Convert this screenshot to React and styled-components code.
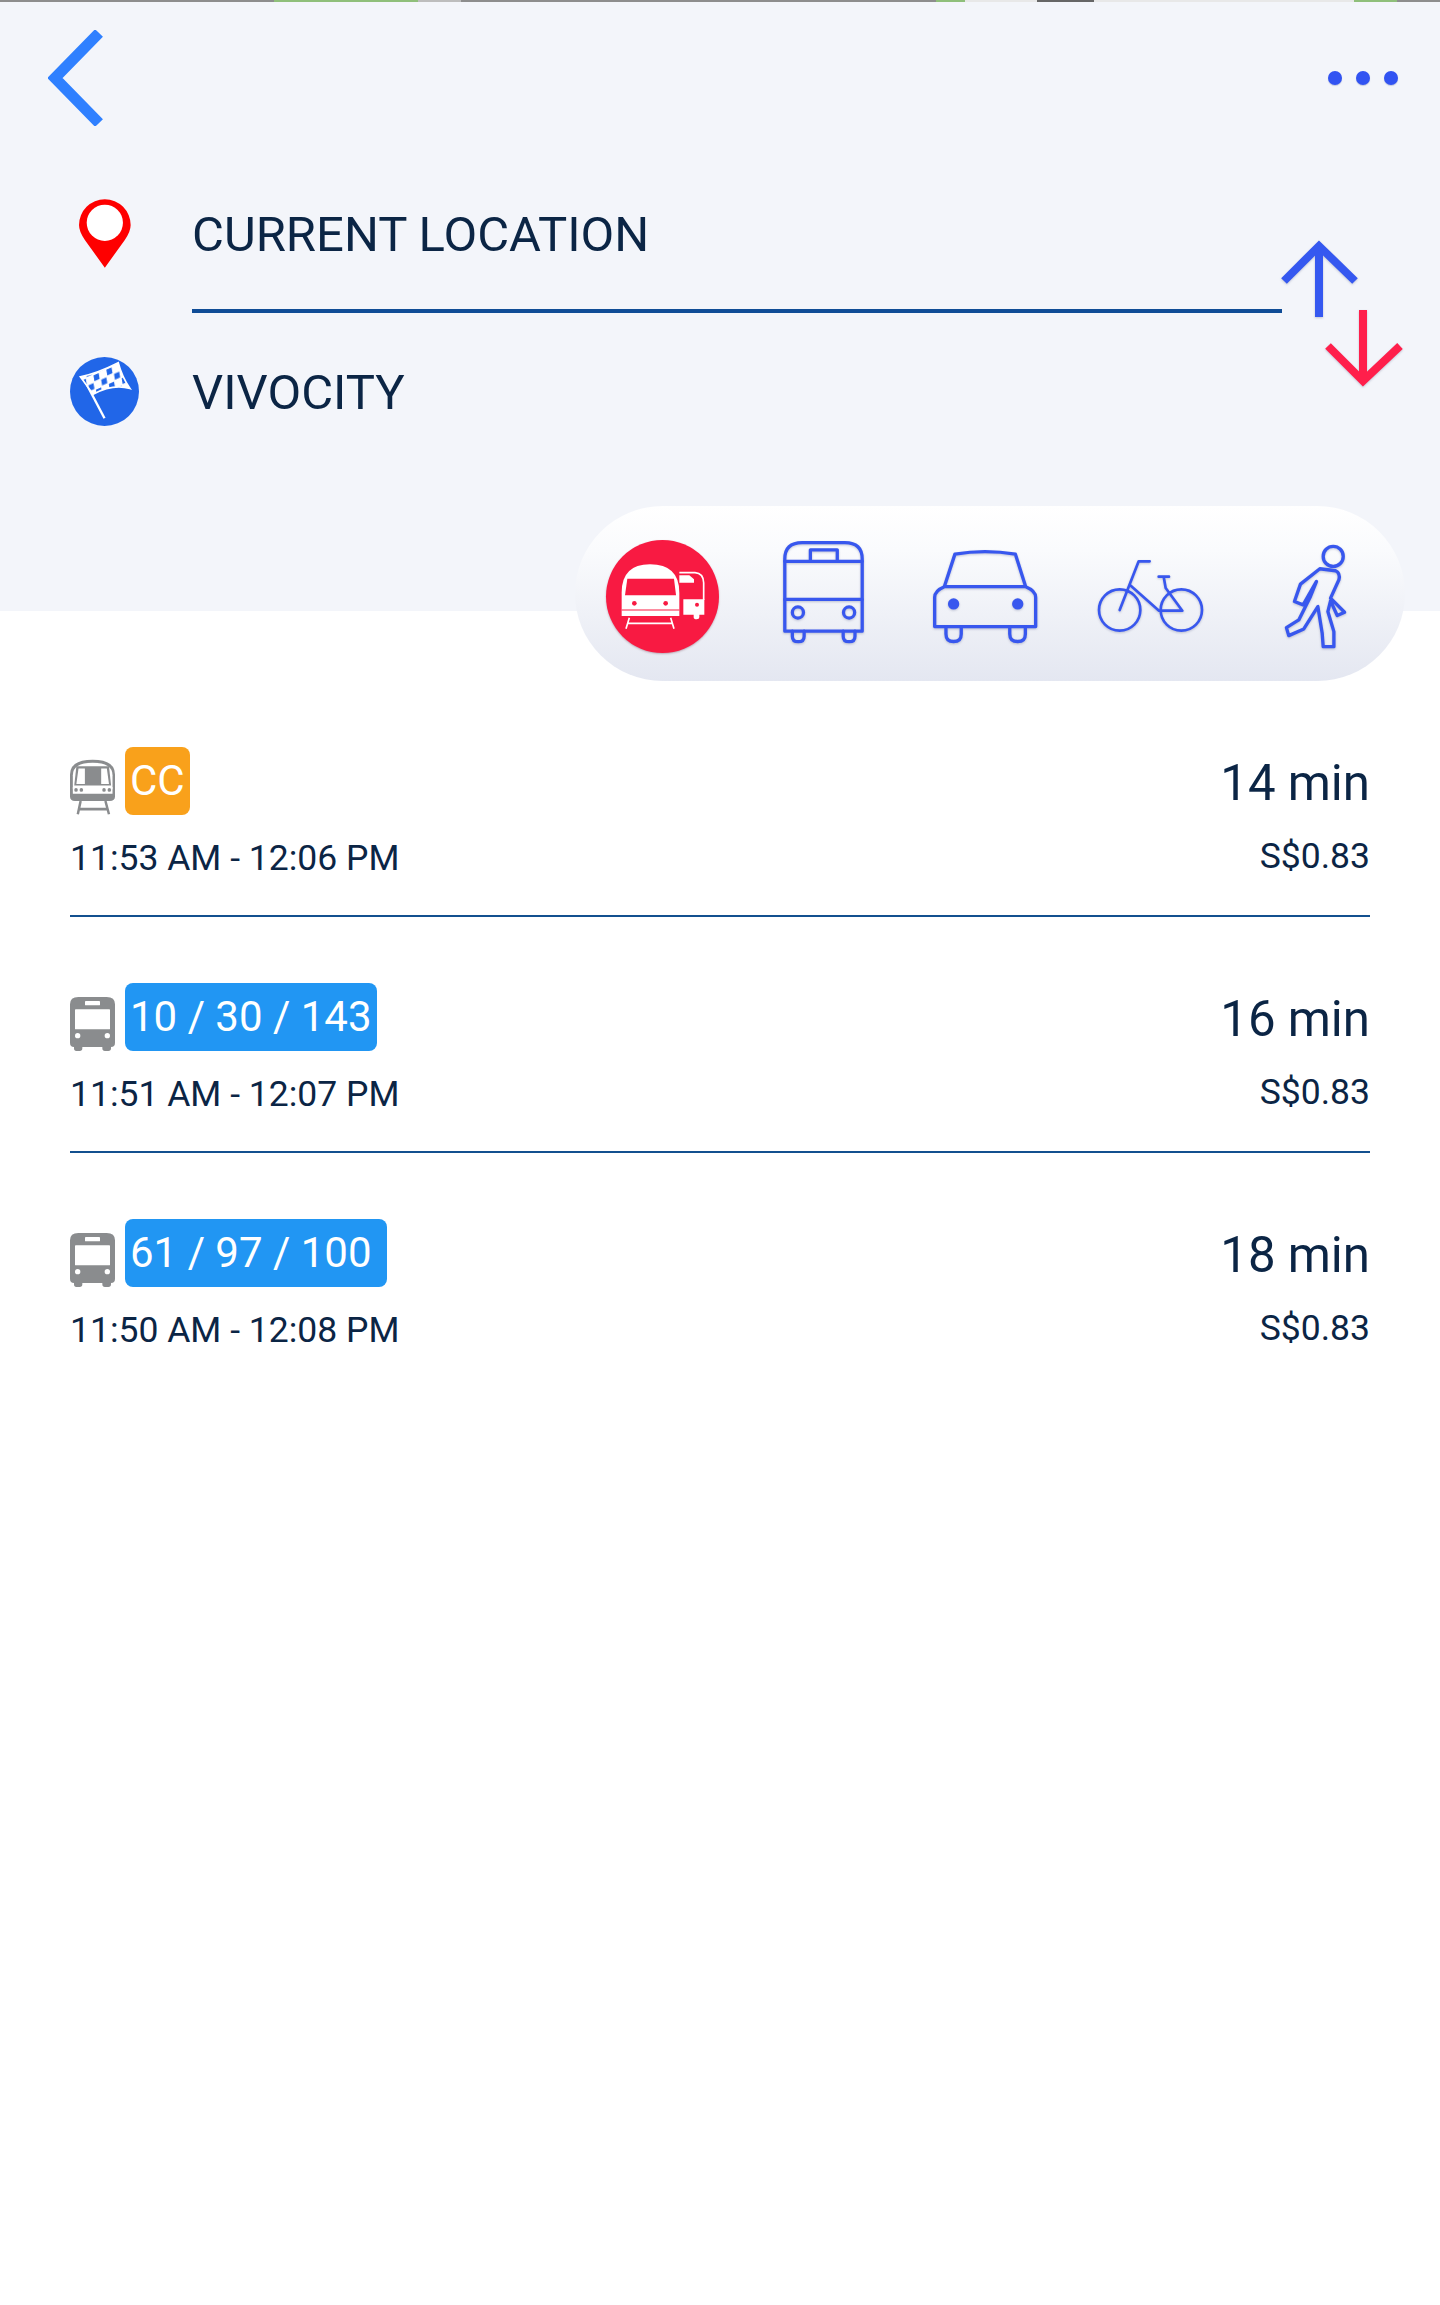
import React from 'react';
import styled, { createGlobalStyle } from 'styled-components';

const GlobalStyle = createGlobalStyle`
html, body {
  margin: 0;
  padding: 0;
  background: #fff;
  font-family: Roboto, "Liberation Sans", sans-serif;
  color: #0b2545;
}
`

const Page = styled.div`
width: 1440px;
min-height: 2305px;
display: flex;
flex-direction: column;
background: #fff;
`

const StatusEdge = styled.div`
height: 2px;
background: linear-gradient(to right,
  #8d8d8d 0 19%, #8fbf7a 19% 29%, #bdbdbd 29% 32%, #8d8d8d 32% 65%,
  #8fbf7a 65% 67%, #e8e8e8 67% 72%, #666 72% 76%, #e8e8e8 76% 94%, #8fbf7a 94% 97%, #8d8d8d 97%);
`

const Header = styled.header`
height: 609px;
background: #f3f5fa;
display: flex;
flex-direction: column;
`

const TopBar = styled.div`
height: 124px;
padding: 28px 42px 0 48px;
box-sizing: border-box;
display: flex;
justify-content: space-between;
align-items: center;
`

const Dots = styled.div`
display: flex;
gap: 14px;
`

const Dot = styled.span`
width: 14px;
height: 14px;
border-radius: 50%;
background: #3153f2;
box-shadow: 0 1px 1px rgba(40, 60, 140, 0.25);
`

const Route = styled.div`
margin-top: 44px;
padding-left: 70px;
display: flex;
align-items: flex-start;
`

const Fields = styled.div`
width: 1212px;
display: flex;
flex-direction: column;
`

const Field = styled.div`
height: 126px;
display: flex;
align-items: center;
gap: 53px;
`

const FieldIcon = styled.div`
width: 69px;
display: flex;
justify-content: center;
`

const FieldText = styled.span`
padding-top: 2px;
font-size: 49px;
color: #0b2545;
`

const FieldLine = styled.div`
height: 4px;
margin: 13px 0 15px 122px;
background: #0f4c96;
`

const Swap = styled.svg`
width: 122px;
height: 146px;
margin-top: 73px;
flex: none;
overflow: visible;
filter: drop-shadow(0 1px 1px rgba(40, 50, 100, 0.25));
`

const ModeBar = styled.nav`
align-self: flex-end;
position: relative;
width: 830px;
height: 175px;
margin: -105px 35px 0 0;
padding: 5px 0 0 6px;
box-sizing: border-box;
border-radius: 88px;
background: linear-gradient(to bottom, #ffffff 0%, #fafbfd 25%, #e4e7f1 100%);
display: grid;
grid-template-columns: 163px 159px 165px 165px 165px;
align-items: center;
justify-items: center;
`

const ModeActive = styled.div`
width: 113px;
height: 113px;
border-radius: 50%;
background: #f81a42;
box-shadow: 0 1px 2px rgba(90, 20, 40, 0.3);
display: flex;
align-items: center;
justify-content: center;
`

const ModeIcon = styled.svg`
display: block;
overflow: visible;
fill: none;
stroke: #3857ee;
stroke-linejoin: round;
stroke-linecap: round;
margin-bottom: ${(p) => p.$lift || 0}px;
filter: drop-shadow(0 1px 1px rgba(30, 40, 100, 0.25));
`

const Results = styled.section`
padding: 0 70px 0 70px;
display: flex;
flex-direction: column;
`

const Result = styled.article`
height: 236px;
box-sizing: border-box;
padding-top: 66px;
border-bottom: ${(p) => (p.$last ? 'none' : '2px solid #13508f')};
display: flex;
justify-content: space-between;
`

const Left = styled.div`
display: flex;
flex-direction: column;
`

const Lines = styled.div`
height: 68px;
display: flex;
align-items: flex-end;
gap: 10px;
`

const Badge = styled.span`
height: 68px;
padding: 0 ${(p) => p.$trail || 5}px 0 5px;
box-sizing: border-box;
border-radius: 8px;
background: ${(p) => p.$color};
color: #fff;
font-size: 42px;
line-height: 68px;
display: block;
`

const Times = styled.div`
margin-top: 21px;
font-size: 35.5px;
line-height: 44px;
color: #0b2545;
`

const Right = styled.div`
display: flex;
flex-direction: column;
align-items: flex-end;
`

const Duration = styled.div`
margin-top: 6px;
font-size: 49.2px;
line-height: 60px;
color: #0b2545;
`

const Fare = styled.div`
margin-top: 21px;
font-size: 35.5px;
line-height: 44px;
color: #0b2545;
`

const BackIcon = () => (
  <svg width="56" height="96" viewBox="0 0 56 96" fill="none" stroke="#2f80ff" strokeWidth="11">
    <path d="M51 3 L7 48 L51 93" strokeLinejoin="miter" />
  </svg>
)

const PinIcon = () => (
  <svg width="52" height="69" viewBox="57 28 155 204">
    <path d="M134 232 L75 150 Q57 125 57 105 A77 77 0 0 1 211 105 Q211 125 193 150 Z" fill="#fe0000" />
    <circle cx="134" cy="98" r="54" fill="#fff" />
  </svg>
)

const FlagIcon = () => (
  <svg width="69" height="69" viewBox="31 501 206 206">
    <defs>
      <pattern id="checks" width="42" height="42" patternUnits="userSpaceOnUse" patternTransform="rotate(-24) skewX(-14)">
        <rect width="42" height="42" fill="#fff" />
        <rect x="3" y="3" width="17" height="17" fill="#2166e8" />
        <rect x="24" y="24" width="17" height="17" fill="#2166e8" />
      </pattern>
    </defs>
    <circle cx="134" cy="604" r="103" fill="#2166e8" />
    <path d="M70 562 L134 684" stroke="#fff" strokeWidth="7" />
    <path d="M62 560 Q112 550 175 518 Q186 560 210 595 Q160 580 100 612 Z" fill="url(#checks)" stroke="#fff" strokeWidth="5" />
  </svg>
)

const TransitIcon = () => (
  <svg width="113" height="113" viewBox="18 12 339 339">
    <path d="M65 240 V170 Q65 85 150 85 Q238 85 238 170 V240 Z" fill="#fff" />
    <path d="M82 128 H222 L228 178 H75 Z" fill="#f81a42" />
    <circle cx="103" cy="202" r="7" fill="#f81a42" />
    <circle cx="197" cy="202" r="7" fill="#f81a42" />
    <path d="M65 222 H238" stroke="#f81a42" strokeWidth="3" />
    <path d="M88 245 L78 278 M212 245 L222 278 M83 262 H218" stroke="#fff" strokeWidth="5" fill="none" />
    <path d="M238 110 H285 Q310 112 311 140 V192" stroke="#fff" strokeWidth="5" fill="none" />
    <path d="M238 118 H268 L282 130 V140 H238 Z" fill="#fff" />
    <path d="M250 190 H313 V236 H298 V244 Q298 250 290 250 Q281 250 281 244 V236 H250 Z" fill="#fff" />
    <circle cx="291" cy="206" r="6" fill="#f81a42" />
  </svg>
)

const BusMode = () => (
  <ModeIcon $lift={8} width="81" height="103" viewBox="667 150 246 314" strokeWidth="10">
    <path d="M672 425 V205 Q672 155 725 155 H855 Q908 155 908 205 V425 Z" />
    <path d="M672 212 H908 M750 212 V177 H832 V212 M672 328 H908" />
    <circle cx="712" cy="368" r="17" />
    <circle cx="868" cy="368" r="17" />
    <path d="M695 425 V440 Q695 457 713 457 Q731 457 731 440 V425 M850 425 V440 Q850 457 868 457 Q886 457 886 440 V425" />
  </ModeIcon>
)

const CarMode = () => (
  <ModeIcon width="103" height="93" viewBox="1122 178 310 279" strokeWidth="10">
    <path d="M1153 288 L1185 190 Q1275 175 1367 190 L1398 288 Q1428 300 1428 320 V408 H1124 V320 Q1124 300 1153 288 Z M1153 288 H1398" />
    <circle cx="1181" cy="340" r="17" fill="#3857ee" stroke="none" />
    <circle cx="1374" cy="340" r="17" fill="#3857ee" stroke="none" />
    <path d="M1158 408 V430 Q1158 453 1181 453 Q1204 453 1204 430 V408 M1350 408 V430 Q1350 453 1374 453 Q1397 453 1397 430 V408" />
  </ModeIcon>
)

const BikeMode = () => (
  <ModeIcon width="105" height="72" viewBox="175 208 315 216" strokeWidth="8">
    <circle cx="240" cy="358" r="62" />
    <circle cx="425" cy="358" r="62" />
    <path d="M240 358 L297 212 H330 M270 282 L358 360 H428 L378 292 L372 258 M357 258 H388" />
  </ModeIcon>
)

const WalkMode = () => (
  <ModeIcon width="67" height="109" viewBox="5 2 200 326" strokeWidth="10">
    <circle cx="158" cy="45" r="30" />
    <path d="M108 120 L68 190 L42 180 L60 128 L118 82 L165 88 Q180 95 175 115 L150 170 L192 212 L170 222 L150 178 L142 210 L160 270 L160 315 L128 315 L125 275 L112 195 L70 262 L25 282 L18 258 L55 235 L90 165 Z" />
  </ModeIcon>
)

const TrainLine = () => (
  <svg width="45" height="56" viewBox="18 28 127 152" preserveAspectRatio="none">
    <path d="M18 130 V70 Q18 30 82 30 Q145 30 145 70 V130 Q145 142 130 142 H32 Q18 142 18 130 Z" fill="#8a8c8e" />
    <path d="M26 110 V72 Q26 38 82 38 Q138 38 138 72 V110 Z" fill="#fff" />
    <path d="M26 122 H138 V104 H26 Z" fill="#fff" />
    <path d="M36 48 H128 L134 100 H30 Z" fill="#8a8c8e" />
    <path d="M42 54 H60 V96 H36 Z M106 54 H122 L128 96 H106 Z" fill="#fff" />
    <circle cx="35" cy="112" r="5" fill="#8a8c8e" />
    <circle cx="50" cy="112" r="5" fill="#8a8c8e" />
    <circle cx="114" cy="112" r="5" fill="#8a8c8e" />
    <circle cx="129" cy="112" r="5" fill="#8a8c8e" />
    <path d="M48 142 L40 178 M118 142 L128 178 M42 164 H124" stroke="#8a8c8e" strokeWidth="7" fill="none" />
  </svg>
)

const BusLine = () => (
  <svg width="45" height="54" viewBox="60 108 135 162">
    <path d="M60 130 Q60 108 85 108 H170 Q195 108 195 130 V245 Q195 258 183 258 V262 Q183 270 175 270 H165 Q157 270 157 262 V258 H97 V262 Q97 270 89 270 H79 Q72 270 72 262 V258 Q60 258 60 245 Z" fill="#8a8c8e" />
    <rect x="75" y="145" width="105" height="60" rx="2" fill="#fff" />
    <rect x="105" y="120" width="45" height="13" rx="2" fill="#fff" />
    <circle cx="83" cy="224" r="8" fill="#fff" />
    <circle cx="172" cy="224" r="8" fill="#fff" />
  </svg>
)

const results = [
  { icon: <TrainLine />, label: 'CC', color: '#f9a11b', times: '11:53 AM - 12:06 PM', duration: '14 min' },
  { icon: <BusLine />, label: '10 / 30 / 143', color: '#2196f3', times: '11:51 AM - 12:07 PM', duration: '16 min' },
  { icon: <BusLine />, label: '61 / 97 / 100', color: '#2196f3', trail: 15, times: '11:50 AM - 12:08 PM', duration: '18 min' },
]

export default function App() {
  return (
    <Page>
      <GlobalStyle />
      <StatusEdge />
      <Header>
        <TopBar>
          <BackIcon />
          <Dots>
            <Dot />
            <Dot />
            <Dot />
          </Dots>
        </TopBar>
        <Route>
          <Fields>
            <Field>
              <FieldIcon><PinIcon /></FieldIcon>
              <FieldText>CURRENT LOCATION</FieldText>
            </Field>
            <FieldLine />
            <Field>
              <FieldIcon><FlagIcon /></FieldIcon>
              <FieldText>VIVOCITY</FieldText>
            </Field>
          </Fields>
          <Swap viewBox="0 0 122 146" fill="none" strokeWidth="8">
            <path d="M37 74 V3 M2 38 L37 3 L73 38" stroke="#3558f0" />
            <path d="M81 67 V138 M46 103 L81 138 L118 103" stroke="#ff1f4b" />
          </Swap>
        </Route>
      </Header>
      <ModeBar>
        <ModeActive><TransitIcon /></ModeActive>
        <BusMode />
        <CarMode />
        <BikeMode />
        <WalkMode />
      </ModeBar>
      <Results>
        {results.map((r, i) => (
          <Result key={r.times} $last={i === results.length - 1}>
            <Left>
              <Lines>
                {r.icon}
                <Badge $color={r.color} $trail={r.trail}>{r.label}</Badge>
              </Lines>
              <Times>{r.times}</Times>
            </Left>
            <Right>
              <Duration>{r.duration}</Duration>
              <Fare>S$0.83</Fare>
            </Right>
          </Result>
        ))}
      </Results>
    </Page>
  )
}
